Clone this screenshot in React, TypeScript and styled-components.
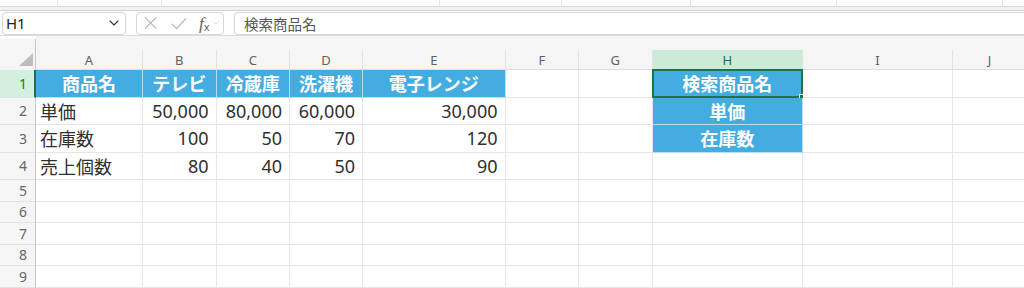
import { FC } from 'react'
import styled, { createGlobalStyle } from 'styled-components'
import { ChevronDown } from 'lucide-react'

const COLS = [
  { name: 'A', w: 107 },
  { name: 'B', w: 73.5 },
  { name: 'C', w: 73.5 },
  { name: 'D', w: 73 },
  { name: 'E', w: 142.5 },
  { name: 'F', w: 73.5 },
  { name: 'G', w: 73.5 },
  { name: 'H', w: 150.5 },
  { name: 'I', w: 150 },
  { name: 'J', w: 74 },
]

const ROW_H = [27.5, 27.5, 27.5, 27.5, 21.5, 21.5, 21.5, 21.5, 21.5]

type Align = 'left' | 'center' | 'right'
type CellData = { text?: string; blue?: boolean; align?: Align; bold?: boolean }

const head = (text: string): CellData => ({ text, blue: true, align: 'center', bold: true })
const num = (text: string): CellData => ({ text, align: 'right' })
const label = (text: string): CellData => ({ text, align: 'left' })

const DATA: Record<number, Record<string, CellData>> = {
  1: {
    A: head('商品名'),
    B: head('テレビ'),
    C: head('冷蔵庫'),
    D: head('洗濯機'),
    E: head('電子レンジ'),
    H: head('検索商品名'),
  },
  2: { A: label('単価'), B: num('50,000'), C: num('80,000'), D: num('60,000'), E: num('30,000'), H: head('単価') },
  3: { A: label('在庫数'), B: num('100'), C: num('50'), D: num('70'), E: num('120'), H: head('在庫数') },
  4: { A: label('売上個数'), B: num('80'), C: num('40'), D: num('50'), E: num('90') },
}

// faint separators left over from the ribbon above
const RIBBON_SEGMENTS = [58, 104, 278, 122, 129, 146, 166]

const CancelIcon = () => (
  <svg width="14" height="14" viewBox="0 0 14 14">
    <path d="M1 1 L13 13 M13 1 L1 13" stroke="#b3b3b3" strokeWidth="1.2" fill="none" />
  </svg>
)

const EnterIcon = () => (
  <svg width="17" height="13" viewBox="0 0 17 13">
    <path d="M1 7 L6 12 L16 1" stroke="#b3b3b3" strokeWidth="1.2" fill="none" />
  </svg>
)

const App: FC = () => (
  <>
    <GlobalStyle />
    <Page>
      <RibbonEdge>
        {RIBBON_SEGMENTS.map((w, i) => (
          <RibbonSegment key={i} $w={w} />
        ))}
      </RibbonEdge>
      <RibbonGap />
      <FormulaBar>
        <NameBox>
          <span>H1</span>
          <ChevronDown size={16} strokeWidth={1.7} color="#3a3a3a" />
        </NameBox>
        <Controls>
          <CancelIcon />
          <EnterIcon />
          <Fx>
            <i>f</i>
            <sub>x</sub>
          </Fx>
          <ChevronDown size={10} strokeWidth={1.5} color="#b8b8b8" />
        </Controls>
        <FormulaInput>検索商品名</FormulaInput>
      </FormulaBar>

      <Sheet $cols={COLS.map((c) => c.w)} $rows={ROW_H}>
        <Corner>
          <svg width="14" height="13" viewBox="0 0 14 13">
            <polygon points="14,0 14,13 0,13" fill="#bdbdbd" />
          </svg>
        </Corner>
        {COLS.map((c) => (
          <ColHead key={c.name}>
            <ColLabel $active={c.name === 'H'}>{c.name}</ColLabel>
          </ColHead>
        ))}

        {ROW_H.map((_, r) => {
          const row = r + 1
          return [
            <RowHead key={`h${row}`} $active={row === 1}>
              {row}
            </RowHead>,
            ...COLS.map((c) => {
              const cell = DATA[row]?.[c.name] ?? {}
              return (
                <Cell
                  key={`${c.name}${row}`}
                  $blue={!!cell.blue}
                  $align={cell.align ?? 'left'}
                  $bold={!!cell.bold}
                >
                  {cell.text}
                  {c.name === 'H' && row === 1 && (
                    <Selection>
                      <Handle />
                    </Selection>
                  )}
                </Cell>
              )
            }),
          ]
        })}
      </Sheet>
    </Page>
  </>
)

export default App

const GlobalStyle = createGlobalStyle`
  html, body {
    margin: 0;
    padding: 0;
    background: #fff;
  }
  body {
    font-family: "Noto Sans", "Noto Sans CJK JP", sans-serif;
    overflow: hidden;
  }
`

const Page = styled.div`
  width: 1024px;
  height: 288px;
  overflow: hidden;
  background: #f5f5f5;
`

const RibbonEdge = styled.div`
  display: flex;
  height: 6px;
  background: #fff;
  border-bottom: 1px solid #d9d9d9;
`

const RibbonSegment = styled.div<{ $w: number }>`
  width: ${(p) => p.$w}px;
  flex-shrink: 0;
  border-right: 1px solid #e4e4e4;
  box-sizing: border-box;
`

const RibbonGap = styled.div`
  height: 3px;
  background: #f1f1f1;
  border-bottom: 1px solid #d4d4d4;
`

const FormulaBar = styled.div`
  display: flex;
  align-items: center;
  height: 24px;
  padding: 0 0 0 2px;
  background: #fff;
  border-bottom: 1px solid #dcdcdc;
  gap: 10px;
`

const Box = styled.div`
  height: 23px;
  box-sizing: border-box;
  border: 1px solid #d6d6d6;
  border-radius: 4px;
  background: #fff;
  display: flex;
  align-items: center;
`

const NameBox = styled(Box)`
  width: 124px;
  justify-content: space-between;
  padding: 0 3px 0 3px;
  font-size: 15px;
  color: #222;
`

const Controls = styled(Box)`
  width: 88px;
  padding: 0 3px 0 7px;
  gap: 0;
  svg:nth-child(1) {
    margin-right: 14px;
  }
  svg:nth-child(2) {
    margin-right: 12px;
  }
`

const Fx = styled.span`
  font-family: "Liberation Serif", serif;
  color: #606060;
  font-size: 17px;
  line-height: 1;
  margin-right: 1px;
  i {
    font-style: italic;
  }
  sub {
    font-family: "Noto Sans", sans-serif;
    font-size: 11px;
    vertical-align: -2px;
  }
`

const FormulaInput = styled(Box)`
  flex: 1;
  border-right: none;
  border-radius: 4px 0 0 4px;
  padding-left: 9px;
  font-size: 14.5px;
  color: #555;
`

const Sheet = styled.div<{ $cols: number[]; $rows: number[] }>`
  display: grid;
  grid-template-columns: 36px ${(p) => p.$cols.map((w) => `${w}px`).join(' ')};
  grid-template-rows: 34px ${(p) => p.$rows.map((h) => `${h}px`).join(' ')};
  background: #fff;
`

const Corner = styled.div`
  background: #f5f5f5;
  margin-top: 3px;
  border-right: 1px solid #c6c6c6;
  display: flex;
  align-items: flex-end;
  justify-content: flex-end;
  padding: 0 2px 4px 0;
`

const ColHead = styled.div`
  background: #f5f5f5;
  display: flex;
  align-items: flex-end;
  border-bottom: 1px solid #dedede;
`

const ColLabel = styled.div<{ $active: boolean }>`
  flex: 1;
  height: 19px;
  display: flex;
  align-items: center;
  justify-content: center;
  font-size: 13px;
  color: ${(p) => (p.$active ? '#1e7145' : '#616161')};
  background: ${(p) => (p.$active ? '#cbead8' : 'transparent')};
  border-right: 1px solid #e2e2e2;
`

const RowHead = styled.div<{ $active: boolean }>`
  display: flex;
  align-items: center;
  justify-content: flex-end;
  padding-right: ${(p) => (p.$active ? '7px' : '8px')};
  font-size: 14px;
  color: ${(p) => (p.$active ? '#1e7145' : '#666')};
  background: ${(p) => (p.$active ? '#d3efdf' : '#f5f5f5')};
  border-right: ${(p) => (p.$active ? '2px solid #217346' : '1px solid #c6c6c6')};
  border-bottom: 1px solid #e2e2e2;
`

const Cell = styled.div<{ $blue: boolean; $align: Align; $bold: boolean }>`
  position: relative;
  display: flex;
  align-items: center;
  justify-content: ${(p) =>
    p.$align === 'right' ? 'flex-end' : p.$align === 'center' ? 'center' : 'flex-start'};
  padding: 0 ${(p) => (p.$align === 'right' ? '7px' : '4px')} 0 4px;
  font-size: 18px;
  font-weight: ${(p) => (p.$bold ? 700 : 400)};
  color: ${(p) => (p.$blue ? '#fff' : '#2f2f2f')};
  background: ${(p) => (p.$blue ? '#43ade2' : '#fff')};
  border-right: 1px solid ${(p) => (p.$blue ? '#b9def2' : '#e6e6e6')};
  border-bottom: 1px solid ${(p) => (p.$blue ? '#b9def2' : '#e6e6e6')};
  white-space: nowrap;
`

const Selection = styled.div`
  position: absolute;
  left: -1px;
  top: -1px;
  right: -1px;
  bottom: -1px;
  border: 2px solid #217346;
  pointer-events: none;
`

const Handle = styled.div`
  position: absolute;
  right: -5px;
  bottom: -5px;
  width: 5px;
  height: 5px;
  background: #217346;
  border: 1px solid #fff;
`
